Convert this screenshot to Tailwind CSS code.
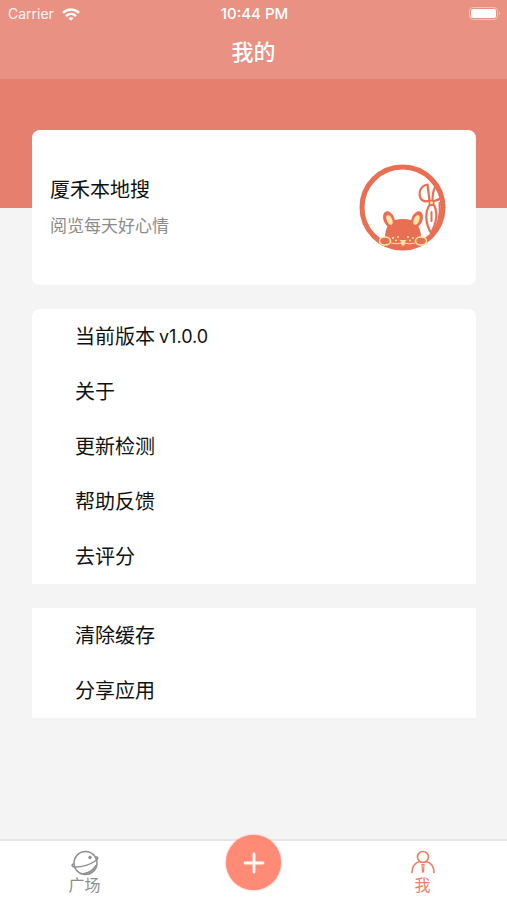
<!DOCTYPE html>
<html lang="zh-CN">
<head>
<meta charset="utf-8">
<meta name="viewport" content="width=device-width, initial-scale=1">
<title>我的</title>
<script src="https://cdn.jsdelivr.net/npm/@tailwindcss/browser@4"></script>
</head>
<body class="min-h-screen flex flex-col bg-[#f4f4f4] text-[#111] font-[Inter,'Noto_Sans_CJK_SC',sans-serif]">
<header class="bg-[#e99182] text-white border-b border-[#d98475]">
  <div class="grid grid-cols-3 items-center h-7 pl-2 pr-1.5 text-sm">
    <div class="flex items-center gap-2">
      <span class="text-white/90">Carrier</span>
      <svg class="w-[18px] h-[13px]" viewBox="0 0 18 13" fill="none" stroke="#fff" stroke-width="2.4" aria-hidden="true">
        <path d="M1 4.800C5.600.4 12.400.4 17 4.800"/>
        <path d="M4 8c2.900-2.700 7.100-2.700 10 0"/>
        <path d="M6.400 10.100c1.500-1.300 3.700-1.300 5.200 0L9 12.700z" fill="#fff" stroke="none"/>
      </svg>
    </div>
    <span class="text-center font-medium text-[15px]">10:44 PM</span>
    <svg class="justify-self-end w-8 h-4" viewBox="0 0 32 16" aria-hidden="true">
      <rect x="0.500" y="1.500" width="28" height="12" rx="3.500" fill="none" stroke="#f5c1b0"/>
      <rect x="2" y="3" width="25" height="9" rx="2" fill="#fff"/>
      <path d="M30 5.500c1.500.8 1.500 3.200 0 4z" fill="#f5c1b0"/>
    </svg>
  </div>
  <h1 class="h-[51px] leading-[48px] text-center text-[22px] font-medium">我的</h1>
</header>
<div class="h-32 bg-[#e67f6e]"></div>
<main class="-mt-[78px] grow pl-8 pr-[31px] pb-6 flex flex-col gap-6">
  <section class="flex items-center justify-between h-[155px] bg-white rounded-lg pl-[18px] pr-[30px]">
    <div class="pt-1">
      <h2 class="text-xl leading-8">厦禾本地搜</h2>
      <p class="text-[17px] leading-10 text-[#8c8c8c]">阅览每天好心情</p>
    </div>
    <svg class="size-[87px]" viewBox="0 0 87 87" fill="none" aria-hidden="true">
      <g stroke="#e86f54">
        <circle cx="43.500" cy="43.500" r="40.500" stroke-width="5"/>
        <g stroke-width="2.200" stroke-linejoin="round" stroke-linecap="round">
          <path d="M68.500 20.500C62 21.500 59 28 61.500 34c1.500 3.500 5.500 4 9 2.500z"/>
          <path d="M77 22c-2.500 3-3.500 8-3.500 14M75 37c3-.5 5-1.500 7-3"/>
          <path d="M70.500 41c-4.500 7-4.500 18 1.500 28 5.500-10 7-20 3-28z"/>
          <path d="M72.500 48v9M80.500 39c1 10-1 22-7 31" stroke-width="2"/>
        </g>
        <circle cx="72.500" cy="38.800" r="2.300" fill="#ffe6a5" stroke-width="1.500"/>
      </g>
      <g fill="#e86f54">
        <path d="M26 79C25 66 29 58 36 56q8-2 16 0c7 2 11 10 10 23-8 7-28 7-36 0"/>
        <ellipse cx="30" cy="55.500" rx="5.500" ry="8.500" transform="rotate(-22 30 55.500)"/>
        <ellipse cx="58" cy="55.500" rx="5.500" ry="8.500" transform="rotate(22 58 55.500)"/>
        <path d="M20 77c12 4 35 4 47 0-7 11-40 11-47 0"/>
      </g>
      <g fill="#ffe6a5">
        <ellipse cx="30.500" cy="56" rx="2.700" ry="5" transform="rotate(-22 30.500 56)"/>
        <ellipse cx="57.500" cy="56" rx="2.700" ry="5" transform="rotate(22 57.500 56)"/>
        <path d="M40.500 76h7l-2.500 3h-2z"/>
        <path d="M41.500 79q2.500 6 5 0z"/>
        <circle cx="39" cy="73" r="1.100"/><circle cx="49" cy="73" r="1.100"/><circle cx="34" cy="74" r="1"/><circle cx="37" cy="76.500" r="1"/><circle cx="51" cy="76.500" r="1"/><circle cx="54" cy="74" r="1"/>
      </g>
      <path d="M32 79q6 2 12-.5 6 2.500 12 .5" stroke="#ffe6a5"/>
      <g fill="#e86f54" stroke="#ffe6a5" stroke-width="1.500"><ellipse cx="26" cy="77" rx="5.500" ry="4"/><ellipse cx="62" cy="77" rx="5.500" ry="4"/></g>
    </svg>
  </section>
  <ul class="bg-white rounded-t-lg text-xl">
    <li class="h-[55px] pl-[43px] flex items-center gap-1">当前版本 <span class="text-lg">v1.0.0</span></li>
    <li><button type="button" class="w-full h-[55px] pl-[43px] text-left">关于</button></li>
    <li><button type="button" class="w-full h-[55px] pl-[43px] text-left">更新检测</button></li>
    <li><button type="button" class="w-full h-[55px] pl-[43px] text-left">帮助反馈</button></li>
    <li><button type="button" class="w-full h-[55px] pl-[43px] text-left">去评分</button></li>
  </ul>
  <ul class="bg-white text-xl">
    <li><button type="button" class="w-full h-[55px] pl-[43px] text-left">清除缓存</button></li>
    <li><button type="button" class="w-full h-[55px] pl-[43px] text-left">分享应用</button></li>
  </ul>
</main>
<nav class="sticky bottom-0 grid grid-cols-3 h-[61px] bg-white border-t-2 border-[#e6e6e6] text-base leading-5">
  <a href="#" class="flex flex-col items-center pt-2 text-[#8e8e8e]">
    <svg class="w-8 h-7" viewBox="0 0 32 28" fill="none" stroke="currentColor" stroke-width="1.500" aria-hidden="true">
      <circle cx="16.500" cy="14" r="11.500"/>
      <path d="M5 14.500c-3 1.500-2.500 3.500 1 3.500 8 0 16-3 21-6.500 3-2 2-4-.5-3.500"/>
      <circle cx="21" cy="8.500" r="1.300" fill="currentColor" stroke-width="1"/>
      <path d="M27 16c-2 6-7 9-13 8.500 6-1 9-3 13-8.500z" fill="currentColor" stroke-width="1"/>
    </svg>
    <span class="-mt-0.5">广场</span>
  </a>
  <div class="flex justify-center items-start">
    <button type="button" aria-label="发布" class="-mt-1.5 size-[55px] rounded-full bg-[#ff8a75] shadow-[0_0_2px_#ff8a75] flex items-center justify-center">
      <svg class="size-6" viewBox="0 0 24 24" stroke="#fff" stroke-width="2.800" stroke-linecap="round" aria-hidden="true"><path d="M12 3v18M3 12h18"/></svg>
    </button>
  </div>
  <a href="#" aria-current="page" class="flex flex-col items-center pt-2 text-[#ed8069]">
    <svg class="w-8 h-7" viewBox="0 0 32 28" fill="none" stroke="currentColor" stroke-width="1.700" stroke-linecap="round" aria-hidden="true">
      <circle cx="16" cy="8" r="5.500"/>
      <path d="M12.500 12.500C8 14 5 18 5 23.500M19.500 12.500C24 14 27 18 27 23.500"/>
      <path d="M15 15.500h2L16.500 23h-1z" stroke-width="1.200"/>
    </svg>
    <span class="-mt-0.5">我</span>
  </a>
</nav>
</body>
</html>
